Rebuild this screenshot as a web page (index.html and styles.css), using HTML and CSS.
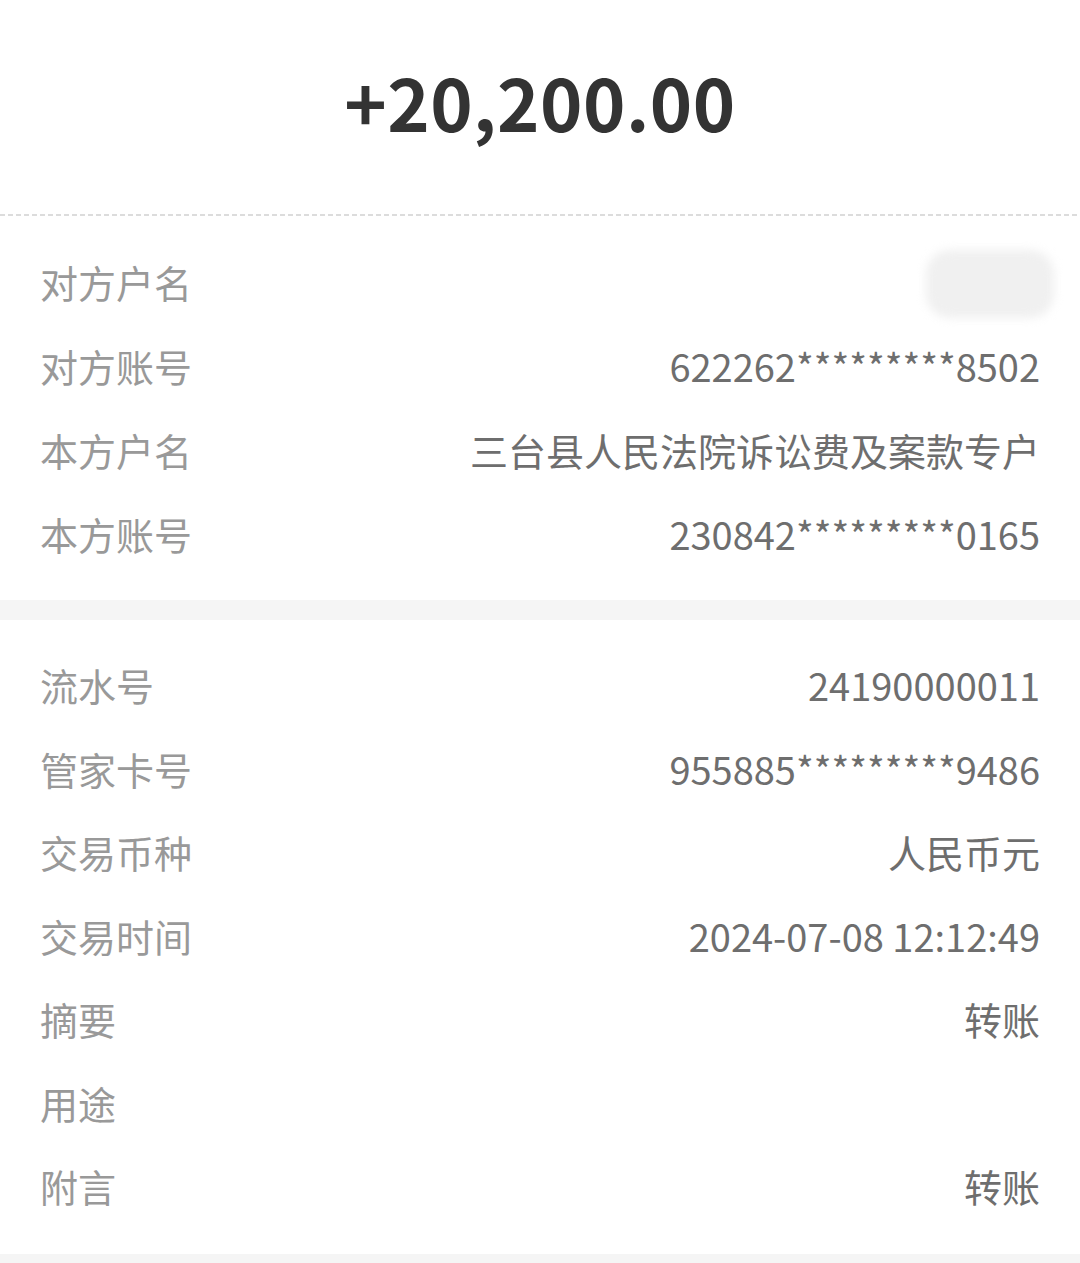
FILE: index.html
```html
<!DOCTYPE html>
<html lang="zh-CN">
<head>
    <meta charset="UTF-8">
    <meta name="viewport" content="width=device-width, initial-scale=1.0">
    <title>交易详情</title>
    <link rel="stylesheet" href="styles.css">
</head>
<body>
    <div class="amount-box">
        <div class="amount">+20,200.00</div>
    </div>
    <div class="dash-line"></div>

    <!-- 对方 / 本方 信息 -->
    <div class="detail-section">
        <div class="detail-row">
            <span class="label">对方户名</span>
            <span class="value"><span class="masked"></span></span>
        </div>
        <div class="detail-row">
            <span class="label">对方账号</span>
            <span class="value">622262*********8502</span>
        </div>
        <div class="detail-row">
            <span class="label">本方户名</span>
            <span class="value">三台县人民法院诉讼费及案款专户</span>
        </div>
        <div class="detail-row">
            <span class="label">本方账号</span>
            <span class="value">230842*********0165</span>
        </div>
    </div>

    <div class="gap"></div>

    <!-- 交易信息 -->
    <div class="detail-section second">
        <div class="detail-row">
            <span class="label">流水号</span>
            <span class="value">24190000011</span>
        </div>
        <div class="detail-row">
            <span class="label">管家卡号</span>
            <span class="value">955885*********9486</span>
        </div>
        <div class="detail-row">
            <span class="label">交易币种</span>
            <span class="value">人民币元</span>
        </div>
        <div class="detail-row">
            <span class="label">交易时间</span>
            <span class="value">2024-07-08 12:12:49</span>
        </div>
        <div class="detail-row">
            <span class="label">摘要</span>
            <span class="value">转账</span>
        </div>
        <div class="detail-row">
            <span class="label">用途</span>
            <span class="value"></span>
        </div>
        <div class="detail-row">
            <span class="label">附言</span>
            <span class="value">转账</span>
        </div>
    </div>

    <div class="gap"></div>
</body>
</html>
```

FILE: styles.css
```css
* {
    box-sizing: border-box;
}

body {
    margin: 0;
    background: #fff;
    font-family: "Noto Sans CJK SC", "Noto Sans", sans-serif;
}

.amount-box {
    height: 214px;
    display: flex;
    align-items: center;
    justify-content: center;
    padding-bottom: 14px;
}

.amount {
    font-size: 72px;
    font-weight: 700;
    color: #333;
    letter-spacing: 0.5px;
}

.dash-line {
    height: 2px;
    background: repeating-linear-gradient(to right, #dcdcdc 0 5px, transparent 5px 8px);
}

.detail-section {
    padding: 26px 40px 22px;
}

.detail-row {
    height: 84px;
    display: flex;
    align-items: center;
    justify-content: space-between;
    padding-bottom: 6px;
    font-size: 38px;
}

.second {
    padding: 26px 40px 23px;
}

.second .detail-row {
    height: 83.5px;
}

.label {
    color: #999;
}

.value {
    color: #6e6e6e;
    text-align: right;
}

.masked {
    display: block;
    width: 128px;
    height: 68px;
    margin-right: -14px;
    margin-bottom: -6px;
    background: #f0f0f0;
    border-radius: 24px;
    filter: blur(5px);
}

.gap {
    height: 20px;
    background: #f5f5f5;
}
```
